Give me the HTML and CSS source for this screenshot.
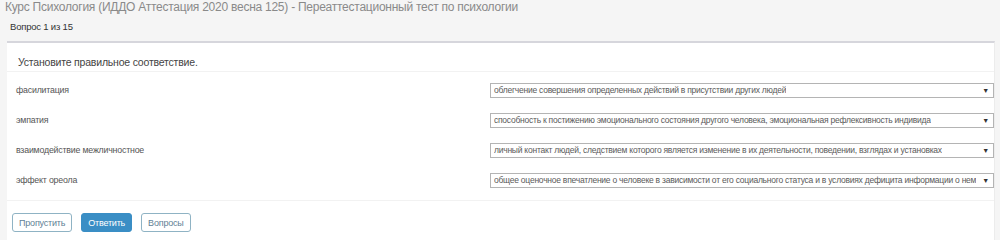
FILE: index.html
```html
<!DOCTYPE html>
<html lang="ru">
<head>
    <meta charset="utf-8">
    <title>Тест</title>
    <link rel="stylesheet" href="styles.css">
</head>
<body>
    <div class="page">
        <h1 class="title">Курс Психология (ИДДО Аттестация 2020 весна 125) - Переаттестационный тест по психологии</h1>
        <div class="counter">Вопрос 1 из 15</div>

        <div class="panel">
            <div class="question">Установите правильное соответствие.</div>

            <div class="rows">
                <div class="row">
                    <span class="term">фасилитация</span>
                    <div class="select"><span class="value">облегчение совершения определенных действий в присутствии других людей</span><span class="arrow">▼</span></div>
                </div>
                <div class="row">
                    <span class="term">эмпатия</span>
                    <div class="select"><span class="value">способность к постижению эмоционального состояния другого человека, эмоциональная рефлексивность индивида</span><span class="arrow">▼</span></div>
                </div>
                <div class="row">
                    <span class="term">взаимодействие межличностное</span>
                    <div class="select"><span class="value">личный контакт людей, следствием которого является изменение в их деятельности, поведении, взглядах и установках</span><span class="arrow">▼</span></div>
                </div>
                <div class="row">
                    <span class="term">эффект ореола</span>
                    <div class="select"><span class="value">общее оценочное впечатление о человеке в зависимости от его социального статуса и в условиях дефицита информации о нем</span><span class="arrow">▼</span></div>
                </div>
            </div>

            <div class="actions">
                <button class="btn">Пропустить</button>
                <button class="btn primary">Ответить</button>
                <button class="btn">Вопросы</button>
            </div>
        </div>
    </div>
</body>
</html>
```

FILE: styles.css
```css
* {
    box-sizing: border-box;
    margin: 0;
    padding: 0;
}

body {
    background-color: #f5f5f5;
    font-family: "Liberation Sans", Arial, sans-serif;
    color: #333;
}

.page {
    padding: 0 5px 0 7px;
}

.title {
    font-size: 12px;
    font-weight: normal;
    letter-spacing: -0.25px;
    color: #8a8a8a;
    margin-left: -2px;
    height: 20px;
    line-height: 15px;
}

.counter {
    font-size: 9.5px;
    letter-spacing: -0.2px;
    color: #333;
    padding-left: 3px;
    height: 21px;
    line-height: 14px;
}

.panel {
    background: #fff;
    border-top: 2px solid #d6d6dc;
    border-right: 1px solid #ececec;
    min-height: 200px;
}

.question {
    font-size: 10.5px;
    letter-spacing: -0.2px;
    color: #444;
    padding: 13px 0 3px 11px;
    border-bottom: 1px solid #f2f2f2;
}

.rows {
    padding: 3px 0 5px 9px;
    border-bottom: 1px solid #f2f2f2;
}

.row {
    display: flex;
    align-items: center;
    justify-content: space-between;
    height: 30px;
}

.term {
    font-size: 8.8px;
    letter-spacing: -0.2px;
    color: #555;
}

.select {
    width: 504px;
    height: 15px;
    display: flex;
    align-items: center;
    justify-content: space-between;
    border: 1px solid #b4b4b4;
    padding: 0 4px 0 3px;
    font-size: 8.5px;
    letter-spacing: -0.24px;
    color: #5a5a5a;
    background: #fff;
}

.value {
    white-space: nowrap;
    overflow: hidden;
}

.arrow {
    font-size: 7px;
    color: #333;
    margin-left: 1px;
}

.actions {
    display: flex;
    gap: 9px;
    padding: 12px 0 0 5px;
}

.btn {
    font-family: inherit;
    font-size: 9px;
    letter-spacing: -0.2px;
    color: #5f7f95;
    background: #fff;
    border: 1px solid #8fb3c4;
    border-radius: 3px;
    height: 19px;
    padding: 0 6px;
}

.btn.primary {
    background: #3a8ec5;
    border-color: #3a8ec5;
    color: #fff;
}
```
